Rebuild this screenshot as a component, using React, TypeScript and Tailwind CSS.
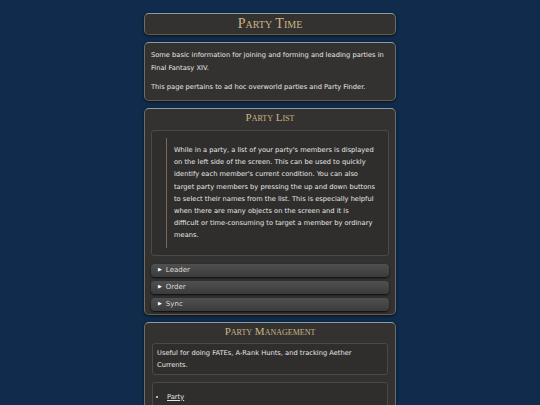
import {ReactNode} from "react";

const cardClass =
    "rounded-[5px] border border-x-[#6e6c66] border-t-[#8d9ba2] border-b-[#6a5b45] bg-[#343230] shadow-[0_1px_3px_rgba(0,0,0,0.6)]";

function Heading({children, size}: {children: ReactNode; size: string})
{
    return (
        <h2
            className={`text-center text-[#c9b583] ${size}`}
            style={{fontFamily: '"Liberation Serif", serif', fontVariant: "small-caps"}}
        >
            {children}
        </h2>
    );
}

function Toggle({label}: {label: string})
{
    return (
        <div className="flex h-[13px] items-center gap-[4px] rounded-[4px] bg-gradient-to-b from-[#505050] to-[#3b3b3b] pl-[7px] text-[7px] text-[#dcdcdc] shadow-[0_1px_2px_rgba(0,0,0,0.8)]">
            <span className="text-[5px] text-white">▶</span>
            <span>{label}</span>
        </div>
    );
}

export default function App()
{
    return (
        <div
            className="min-h-[405px] bg-[#102b4b] pt-[13px] text-[6.7px] text-[#e6e6e6]"
            style={{fontFamily: '"DejaVu Sans", Verdana, sans-serif'}}
        >
            <div className="mx-auto flex w-[252px] flex-col gap-[7px]">
                <div className={`${cardClass} flex h-[22px] items-center justify-center`}>
                    <Heading size="text-[14px] leading-none">Party Time</Heading>
                </div>

                <div className={`${cardClass} px-[6px] py-[6px] leading-[13px]`}>
                    <p>Some basic information for joining and forming and leading parties in Final Fantasy XIV.</p>
                    <p className="mt-[6px]">This page pertains to ad hoc overworld parties and Party Finder.</p>
                </div>

                <div className={`${cardClass} px-[6px] pb-[3px]`}>
                    <Heading size="text-[11px] leading-[17px]">Party List</Heading>
                    <div className="mt-[4px] rounded-[3px] border border-[#4c4a48] bg-[#2f2e2c] pl-[14px] pr-[13px] py-[7px]">
                        <blockquote className="border-l border-[#7b6a52] py-[6px] pl-[7px] leading-[12.2px]">
                            While in a party, a list of your party's members is displayed on the left side of the screen. This can be used to quickly identify each member's current condition. You can also target party members by pressing the up and down buttons to select their names from the list. This is especially helpful when there are many objects on the screen and it is difficult or time-consuming to target a member by ordinary means.
                        </blockquote>
                    </div>
                    <div className="mt-[8px] flex flex-col gap-[4px]">
                        <Toggle label="Leader"/>
                        <Toggle label="Order"/>
                        <Toggle label="Sync"/>
                    </div>
                </div>

                <div className={`${cardClass} px-[7px] pb-[7px]`}>
                    <Heading size="text-[11px] leading-[16px]">Party Management</Heading>
                    <div className="mt-[4px] rounded-[3px] border border-[#4c4a48] bg-[#2f2e2c] px-[4px] py-[3px] leading-[12px]">
                        Useful for doing FATEs, A-Rank Hunts, and tracking Aether Currents.
                    </div>
                    <div className="mt-[7px] rounded-[3px] border border-[#4c4a48] bg-[#2f2e2c] px-[8px] pt-[8px] pb-[14px] leading-[12px]">
                        <ul className="list-disc pl-[6px]">
                            <li><a className="underline">Party</a></li>
                        </ul>
                    </div>
                </div>
            </div>
        </div>
    );
}
